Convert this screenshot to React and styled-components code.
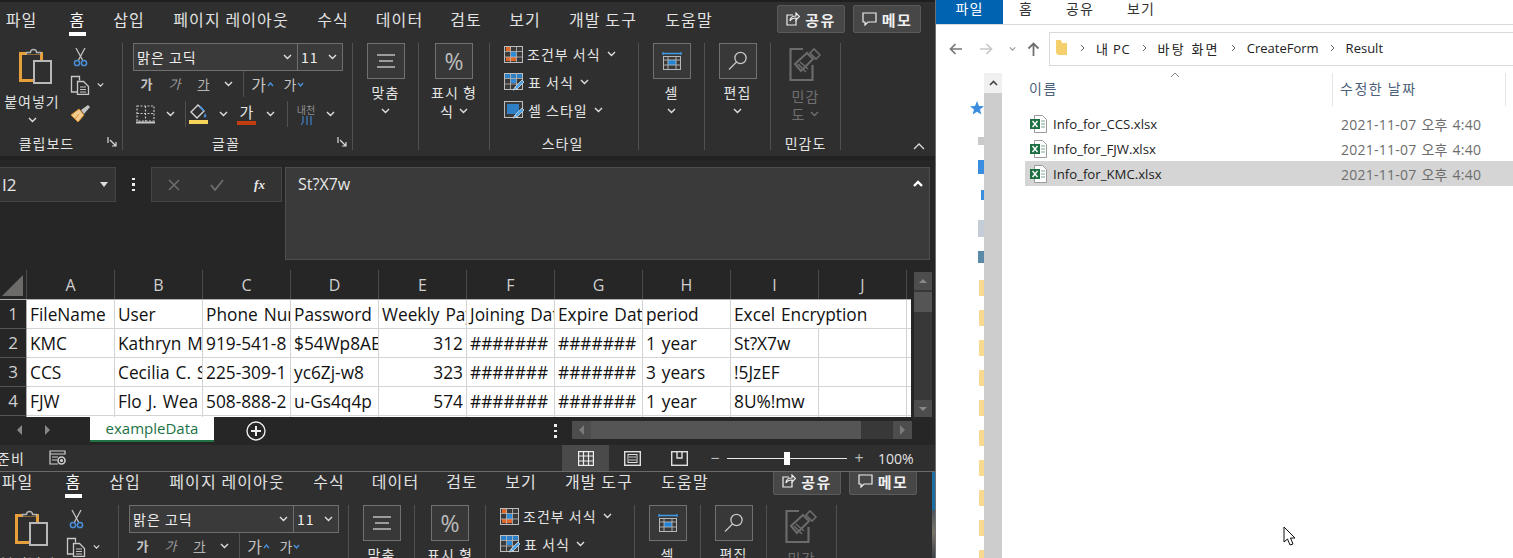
import React from "react";
import styled, { createGlobalStyle } from "styled-components";

const UI = `"Open Sans", "Noto Sans CJK KR", sans-serif`;
const KR = `"Noto Sans CJK KR", "Open Sans", sans-serif`;

const Global = createGlobalStyle`
  html, body { margin: 0; padding: 0; width: 1513px; height: 558px; overflow: hidden; background: #fff; }
  #root { width: 1513px; height: 558px; }
  * { box-sizing: border-box; }
`;

const Page = styled.div`display: flex; width: 1513px; height: 558px; overflow: hidden; font-family: ${KR};`;
const ExcelPane = styled.div`width: 935px; height: 558px; flex: none; display: flex; flex-direction: column; background: #262626;`;

/* ---------- ribbon ---------- */
const TopStrip = styled.div`height: 2px; background: #1f1f1f;`;
const TabRow = styled.div`height: 38px; background: #2f2f2f; display: flex; gap: 29px; padding: 0 14px 0 6px; align-items: flex-start;`;
const Tab = styled.div`
  width: ${p => p.$w}px; height: 38px; flex: none; display: flex; justify-content: center; padding-top: 5px; position: relative; margin-left: ${p => p.$ml || 0}px;
  font-size: 16px; line-height: 24px; letter-spacing: 1.1px; white-space: nowrap; color: ${p => (p.$active ? "#fff" : "#e2e2e2")};
  ${p => p.$active && `&::after { content: ""; position: absolute; left: -1px; right: -1px; top: 30px; height: 4px; background: #fff; }`}
`;
const ShareRow = styled.div`margin-left: auto; display: flex; gap: 8px; padding-top: 3px;`;
const ShareButton = styled.div`
  width: 68px; height: 28px; display: flex; align-items: center; justify-content: center; gap: 5px;
  background: #474747; border: 1px solid #5a5a5a; border-radius: 2px; color: #f0f0f0; font-size: 15px; font-weight: 700; letter-spacing: 1.5px;
`;
const RibbonBar = styled.div`height: 116px; background: #2f2f2f; display: flex; padding: 3px 0 6px;`;
const Group = styled.div`
  width: ${p => p.$w}px; flex: none; display: flex; flex-direction: column;
  border-right: 1px solid #505050; position: relative;
`;
const GroupBody = styled.div`flex: 1; min-height: 0; display: flex;`;
const GroupLabel = styled.div`
  height: 22px; flex: none; display: flex; justify-content: center; padding-top: 6px; position: relative; padding-right: ${p => p.$shift || 0}px;
  font-size: 14px; line-height: 18px; letter-spacing: 1px; color: #e4e4e4; white-space: nowrap;
`;
const Launcher = styled.svg`position: absolute; right: 4px; top: 9px;`;
const CollapseMark = styled.svg`position: absolute; right: -85px; bottom: 0px;`;
const PasteColumn = styled.div`width: 64px; flex: none; display: flex; flex-direction: column; align-items: center; padding-top: 3px;`;
const PasteSvg = styled.svg`margin-left: 5px; flex: none;`;
const PasteLabel = styled.div`font-size: 14px; line-height: 18px; letter-spacing: 1px; color: #e4e4e4; margin-top: 8px; white-space: nowrap;`;
const ChevronBelow = styled.div`display: flex; height: 6px; margin-top: ${p => p.$mt}px; gap: 4px; align-items: center; justify-content: center;`;
const ToolColumn = styled.div`width: 40px; flex: none; display: flex; flex-direction: column; padding-left: 4px;`;
const ToolRow = styled.div`height: ${p => p.$h}px; display: flex; align-items: center; gap: 5px;`;
const FontColumn = styled.div`flex: 1; display: flex; flex-direction: column; padding-left: 10px;`;
const SelectRow = styled.div`display: flex; height: 28px; flex: none;`;
const SelectBox = styled.div`
  width: ${p => p.$w}px; height: 28px; display: flex; align-items: center; justify-content: space-between; padding: 0 5px 0 3px; margin-left: ${p => p.$ml || 0}px;
  background: #3a3a3a; border: 1px solid #6f6f6f; color: #eee; font-size: 14px; letter-spacing: 1px; white-space: nowrap;
`;
const SlotRow = styled.div`display: flex; align-items: center; height: ${p => p.$h}px; margin-top: ${p => p.$mt || 0}px;`;
const Slot = styled.div`width: ${p => p.$w}px; flex: none; display: flex; align-items: center; justify-content: center; gap: 1px;`;
const Glyph = styled.span`
  font-size: ${p => p.$size || 13}px; line-height: 18px; color: ${p => p.$color || "#c4c4c4"}; font-weight: ${p => p.$weight || 400};
  font-style: ${p => (p.$italic ? "italic" : "normal")}; text-decoration: ${p => (p.$under ? "underline" : "none")};
`;
const ColorStack = styled.div`display: flex; flex-direction: column; align-items: center; width: 19px;`;
const ColorBar = styled.div`width: 19px; height: 4px; background: ${p => p.$c}; margin-top: 1px;`;
const ColorGlyph = styled.span`font-size: 15px; line-height: 17px; color: #e6e6e6;`;
const PhoneticStack = styled.div`display: flex; flex-direction: column; align-items: center;`;
const PhoneticText = styled.span`font-size: 10px; line-height: 12px; color: #8f8f8f;`;
const Divider = styled.div`width: 1px; height: ${p => p.$h}px; background: #505050; flex: none; margin-left: ${p => p.$ml || 0}px;`;
const BigColumn = styled.div`flex: 1; display: flex; flex-direction: column; align-items: center;`;
const BigButton = styled.div`width: 38px; height: 36px; flex: none; display: flex; align-items: center; justify-content: center; background: #383838; border: 1px solid #707070;`;
const PercentMark = styled.span`font-size: 23px; line-height: 1; color: #bdbdbd; font-family: "Open Sans", sans-serif;`;
const BigLabel = styled.div`
  font-size: 14px; line-height: 18px; letter-spacing: 1px; margin-top: ${p => p.$mt ?? 4}px; white-space: nowrap; display: flex; align-items: center; gap: 5px;
  color: ${p => (p.$dim ? "#707070" : "#e4e4e4")};
`;
const StyleColumn = styled.div`flex: 1; display: flex; flex-direction: column; gap: 6px; padding-left: 14px;`;
const StyleRow = styled.div`height: 22px; display: flex; align-items: center; gap: 4px; font-size: 14px; letter-spacing: 1px; color: #e4e4e4; white-space: nowrap;`;
const StyleChevron = styled.span`display: flex; margin-left: 2px;`;
const SensIconWrap = styled.div`height: 39px; display: flex; align-items: flex-end;`;

/* ---------- formula bar ---------- */
const FormulaZone = styled.div`height: 114px; flex: none; background: #262626; border-top: 4px solid #222; padding-top: 7px; display: flex; align-items: flex-start;`;
const NameBox = styled.div`
  width: 116px; height: 35px; flex: none; display: flex; align-items: center; justify-content: space-between; padding: 0 7px 0 2px;
  background: #333; border: 1px solid #444; border-left: 0; color: #e6e6e6; font-family: ${UI}; font-size: 17px;
`;
const Caret = styled.span`width: 0; height: 0; border-left: 4px solid transparent; border-right: 4px solid transparent; border-top: 5px solid #ddd;`;
const VDots = styled.div`width: 35px; height: 35px; flex: none; display: flex; flex-direction: column; align-items: center; justify-content: center; gap: 3px;`;
const Dot = styled.i`width: 2.5px; height: 2.5px; background: #eee; display: block;`;
const FxBox = styled.div`width: 131px; height: 35px; flex: none; display: flex; align-items: center; background: #333; border: 1px solid #444;`;
const FxSlot = styled.div`width: 43px; display: flex; justify-content: center; align-items: center;`;
const FxText = styled.span`font-family: "Liberation Serif", serif; font-style: italic; font-weight: 700; font-size: 13px; line-height: 1; color: #e8e8e8;`;
const FormulaInput = styled.div`
  width: 645px; height: 93px; flex: none; margin-left: 3px; display: flex; justify-content: space-between; padding: 4px 6px 0 12px;
  background: #3a3a3a; border: 1px solid #4e4e4e; color: #e8e8e8; font-family: ${UI}; font-size: 16px; line-height: 24px;
`;
const UpChevron = styled.svg`margin-top: 8px; flex: none;`;

/* ---------- sheet ---------- */
const SheetArea = styled.div`height: 147px; flex: none; display: flex; background: #262626;`;
const SheetGrid = styled.div`width: 911px; flex: none; overflow: hidden; display: flex; flex-direction: column;`;
const HeaderRow = styled.div`height: 30px; flex: none; display: flex; border-bottom: 1px solid #b0b0b0; background: #262626;`;
const Corner = styled.div`width: 27px; flex: none; border-right: 1px solid #4a4a4a; padding: 5px 3px 3px 2px; display: flex; align-items: flex-end; justify-content: flex-end;`;
const CornerMark = styled.div`width: 21px; height: 21px; background: #6d6a6a; clip-path: polygon(100% 0, 100% 100%, 0 100%);`;
const ColHead = styled.div`
  width: ${p => p.$w}px; flex: none; text-align: center; border-right: 1px solid ${p => (p.$end ? "transparent" : "#4a4a4a")};
  font-family: ${UI}; font-size: 16px; line-height: 30px; color: #cfcfcf;
`;
const BodyRow = styled.div`height: 29px; flex: none; display: flex;`;
const RowHead = styled.div`
  width: 27px; flex: none; background: #262626; border-bottom: 1px solid #555; border-right: 1px solid #b0b0b0; text-align: center;
  font-family: ${UI}; font-size: 17px; line-height: 28px; color: #cfcfcf;
`;
const Cell = styled.div`
  width: ${p => p.$w}px; flex: none; background: #fff; overflow: hidden; white-space: nowrap;
  border-right: 1px solid ${p => (p.$noLine ? "#fff" : "#d4d4d4")}; border-bottom: 1px solid #d4d4d4;
  font-family: ${UI}; font-size: 17.3px; word-spacing: 1.5px; line-height: 29px; color: #111; padding: 0 3px;
  text-align: ${p => (p.$num ? "right" : "left")};
`;
const VScroll = styled.div`width: 18px; flex: none; margin: 2px 0 0 3px; height: 146px; background: #383838; display: flex; flex-direction: column;`;
const ScrollBtn = styled.div`height: 18px; flex: none; background: #4d4d4d; display: flex; align-items: center; justify-content: center;`;
const VThumb = styled.div`height: 20px; flex: none; margin-top: 2px; background: #555;`;
const VSpace = styled.div`flex: 1;`;
const TriUp = styled.span`width: 0; height: 0; border-left: 4px solid transparent; border-right: 4px solid transparent; border-bottom: 4px solid ${p => p.$c || "#888"};`;
const TriDown = styled.span`width: 0; height: 0; border-left: 4px solid transparent; border-right: 4px solid transparent; border-top: 4px solid ${p => p.$c || "#888"};`;
const TriLeft = styled.span`width: 0; height: 0; border-top: 5px solid transparent; border-bottom: 5px solid transparent; border-right: 5px solid ${p => p.$c || "#888"};`;
const TriRight = styled.span`width: 0; height: 0; border-top: 5px solid transparent; border-bottom: 5px solid transparent; border-left: 5px solid ${p => p.$c || "#888"};`;

const SheetBar = styled.div`height: 28px; flex: none; display: flex; align-items: flex-start; background: #262626;`;
const NavPair = styled.div`width: 90px; height: 26px; flex: none; display: flex; align-items: center; gap: 23px; padding-left: 17px;`;
const SheetTab = styled.div`
  width: 124px; height: 25px; flex: none; background: #fff; border-bottom: 2px solid #217346; text-align: center;
  font-family: ${UI}; font-size: 15px; line-height: 22px; color: #217346;
`;
const AddWrap = styled.div`width: 84px; height: 28px; flex: none; display: flex; align-items: center; justify-content: center;`;
const BarDots = styled.div`margin-left: 241px; width: 33px; height: 28px; flex: none; display: flex; flex-direction: column; align-items: center; justify-content: center; gap: 3px;`;
const HScroll = styled.div`width: 340px; height: 18px; flex: none; margin-top: 4px; background: #383838; display: flex;`;
const HBtn = styled.div`width: 19px; flex: none; background: #4d4d4d; display: flex; align-items: center; justify-content: center;`;
const HThumb = styled.div`width: 270px; flex: none; background: #555;`;
const HSpace = styled.div`flex: 1;`;

const StatusBar = styled.div`height: 27px; flex: none; display: flex; align-items: center; background: #2f2f2f; border-bottom: 1px solid #6a6a6a; color: #e4e4e4;`;
const ReadyText = styled.span`font-size: 14px; letter-spacing: 1px; margin-left: -3px; width: 52px; flex: none; white-space: nowrap;`;
const ViewButtons = styled.div`margin-left: 496px; display: flex; height: 26px;`;
const ViewButton = styled.div`width: 47px; display: flex; align-items: center; justify-content: center; background: ${p => (p.$active ? "#4a4a4a" : "transparent")};`;
const SliderWrap = styled.div`margin-left: 6px; display: flex; align-items: center; gap: 6px; height: 26px;`;
const ZoomMark = styled.span`font-family: ${UI}; font-size: 16px; line-height: 1; color: #bbb; width: 12px; text-align: center;`;
const SliderTrack = styled.div`width: 120px; height: 1px; background: #e8e8e8; position: relative;`;
const SliderThumb = styled.div`position: absolute; left: 57px; top: -6px; width: 6px; height: 13px; background: #fff;`;
const ZoomValue = styled.span`font-family: ${UI}; font-size: 14px; margin-left: 7px; color: #e4e4e4;`;

/* ---------- second (overlapped) window ---------- */
const BelowWindow = styled.div`flex: 1; min-height: 0; display: flex; overflow: hidden; background: #2f2f2f;`;
const BelowClip = styled.div`flex: 1; min-width: 0; overflow: hidden;`;
const BelowInner = styled.div`width: 935px; margin: -10px 0 0 -4px;`;
const Wallpaper = styled.div`width: 3px; flex: none; background: linear-gradient(#1c6ea4 0 38px, #4a5560 38px, #7d7468 60px, #3d4248 100%);`;

/* ---------- explorer ---------- */
const Explorer = styled.div`flex: 1; min-width: 0; height: 558px; background: #fff; border-left: 1px solid #707070; display: flex; flex-direction: column; position: relative; overflow: hidden;`;
const ExTabs = styled.div`height: 25px; flex: none; display: flex; border-bottom: 1px solid #dadada;`;
const ExTab = styled.div`
  width: ${p => p.$w}px; height: 24px; flex: none; display: flex; justify-content: center;
  background: ${p => (p.$file ? "#0063b1" : "transparent")}; color: ${p => (p.$file ? "#fff" : "#333")};
  font-size: 14px; line-height: 17px; letter-spacing: 1px; white-space: nowrap;
`;
const ExToolbar = styled.div`height: 48px; flex: none; display: flex; align-items: flex-start; padding-top: 7px;`;
const NavArrows = styled.div`width: 113px; flex: none; height: 34px; display: flex; align-items: center; padding-left: 13px;`;
const ArrowSlot = styled.div`width: ${p => p.$w}px; flex: none; display: flex; justify-content: flex-start;`;
const Address = styled.div`flex: 1; height: 34px; border: 1px solid #d9d9d9; border-right: 0; display: flex; align-items: center; padding: 0 0 2px 6px; gap: 11px; color: #222; font-family: ${UI}; font-size: 13px; white-space: nowrap;`;
const AddressFolder = styled.svg`margin-right: 2px; flex: none;`;
const Crumb = styled.span`letter-spacing: ${p => p.$ls || 0}px;`;
const ExBody = styled.div`flex: 1; min-height: 0; display: flex;`;
const NavPane = styled.div`width: 48px; flex: none; display: flex; flex-direction: column; align-items: flex-end; overflow: hidden;`;
const NavItem = styled.div`margin-top: ${p => p.$mt}px; height: ${p => p.$h}px; width: ${p => p.$w}px; flex: none; background: ${p => p.$bg}; border-radius: ${p => p.$r || 0}px 0 0 ${p => p.$r || 0}px;`;
const NavStar = styled.svg`margin-top: 28px; flex: none;`;
const ExScroll = styled.div`width: 18px; flex: none; background: #cdcdcd; display: flex; flex-direction: column;`;
const ExScrollTop = styled.div`height: 20px; background: #f0f0f0; display: flex; align-items: center; justify-content: center;`;
const ExMain = styled.div`flex: 1; min-width: 0; display: flex; flex-direction: column; position: relative;`;
const ColHeaders = styled.div`height: 38px; flex: none; display: flex; color: #4c607a; font-size: 14px; letter-spacing: 1.5px;`;
const ColTitle = styled.div`
  width: ${p => p.$w}px; flex: none; height: 33px; padding: 4px 0 0 ${p => p.$pad}px; line-height: 22px; border-right: 1px solid #e5e5e5; white-space: nowrap;
`;
const SortCaret = styled.svg`position: absolute; left: 168px; top: -1px;`;
const FileRow = styled.div`
  height: 25px; flex: none; margin-left: 23px; display: flex; align-items: center; padding-left: 5px;
  background: ${p => (p.$sel ? "#d5d5d5" : "transparent")}; font-family: ${UI}; font-size: 13.2px; white-space: nowrap;
`;
const FileIcon = styled.svg`flex: none; margin-right: 6px;`;
const FileName = styled.span`width: 288px; flex: none; color: #222;`;
const FileDate = styled.span`color: #6d6d6d; font-size: 14px; letter-spacing: .25px; word-spacing: 1px;`;
const Pointer = styled.svg`position: absolute; left: 347px; top: 526px;`;

/* ---------- icons ---------- */
const Chev = ({ c = "#e0e0e0", w = 9 }) => (
  <svg width={w} height="6" viewBox="0 0 9 6"><path d="M1 1l3.5 3.5L8 1" fill="none" stroke={c} strokeWidth="1.4" /></svg>
);
const PasteIcon = () => (
  <PasteSvg width="34" height="38" viewBox="0 0 34 38">
    <rect x="2.5" y="7.5" width="21" height="27" fill="none" stroke="#e5a03c" strokeWidth="3" />
    <path d="M8.5 8.5v-2h4a3 3 0 0 1 6 0h4v2" fill="#2f2f2f" stroke="#b5b5b5" strokeWidth="1.3" />
    <rect x="16" y="15" width="17" height="22" fill="#2f2f2f" stroke="#b8b8b8" strokeWidth="2" />
  </PasteSvg>
);
const Scissors = () => (
  <svg width="15" height="20" viewBox="0 0 15 20">
    <path d="M3 1l6.5 12M12 1L5.5 13" fill="none" stroke="#c4c4c4" strokeWidth="1.3" />
    <circle cx="4" cy="16" r="2.6" fill="none" stroke="#4a90d9" strokeWidth="1.5" />
    <circle cx="11" cy="16" r="2.6" fill="none" stroke="#4a90d9" strokeWidth="1.5" />
  </svg>
);
const CopyIcon = () => (
  <svg width="20" height="20" viewBox="0 0 20 20" fill="none" stroke="#c8c8c8" strokeWidth="1.3">
    <path d="M7 17H1.5V1.5h8v4" /><path d="M7.5 6.5h6l5 5v8H7.5z" fill="#2f2f2f" />
    <path d="M10 12h6M10 14.5h6M10 17h6" strokeWidth="1" />
  </svg>
);
const Brush = () => (
  <svg width="21" height="19" viewBox="0 0 21 19">
    <path d="M1 11l8-6 5 6-6 7z" fill="#f2cb92" stroke="#d98f2b" />
    <path d="M5 15l4-5" stroke="#d98f2b" />
    <path d="M11 6l7-5 2 2-6 7z" fill="#c4c4c4" />
  </svg>
);
const BorderIcon = () => (
  <svg width="19" height="19" viewBox="0 0 19 19" fill="none" stroke="#c4c4c4" strokeWidth="1.2">
    <rect x="1" y="1" width="17" height="15" strokeDasharray="2 1.5" /><path d="M9.5 1v15M1 8.5h17" strokeDasharray="2 1.5" />
    <path d="M0 17.5h19" strokeWidth="2" />
  </svg>
);
const BucketIcon = () => (
  <svg width="19" height="15" viewBox="0 0 19 15">
    <path d="M9 1L2 8l6 6 7-7z" fill="none" stroke="#d8d8d8" strokeWidth="1.4" />
    <path d="M10 3l4 4 2 0-4-5z" fill="#4a90d9" /><path d="M16 9c1 2 2 3 1 4s-3 0-2-1z" fill="#4a90d9" />
  </svg>
);
const AlignIcon = () => (
  <svg width="20" height="14" viewBox="0 0 20 14"><path d="M1 1h18M3 7h14M1 13h18" stroke="#bdbdbd" strokeWidth="1.6" fill="none" /></svg>
);
const SmallGrid = ({ children }) => (
  <svg width="19" height="17" viewBox="0 0 19 17" fill="none">
    <rect x=".5" y=".5" width="18" height="16" stroke="#bdbdbd" fill="#3a3a3a" />
    {children}
    <path d="M6.5 0v17M12.5 0v17M0 5.5h19M0 11h19" stroke="#bdbdbd" strokeWidth=".8" />
  </svg>
);
const CondIcon = () => (
  <SmallGrid>
    <rect x="2" y="1" width="5" height="4" fill="#e0672a" /><rect x="7" y="6" width="5" height="5" fill="#2e8bd9" /><rect x="2" y="11" width="10" height="4" fill="#e0672a" />
  </SmallGrid>
);
const BrushMark = () => <path d="M18 7l-7 7-2 3 4-1 7-7zM11 14l3 3" fill="#4aa3e8" stroke="#d8d8d8" strokeWidth=".8" />;
const TableIcon = () => (
  <svg width="20" height="18" viewBox="0 0 20 18" fill="none">
    <rect x=".5" y=".5" width="18" height="16" stroke="#bdbdbd" fill="#3a3a3a" />
    <rect x="1" y="1" width="17" height="4" fill="#2e7fc4" /><rect x="7" y="6" width="5" height="4" fill="#2e8bd9" />
    <path d="M6.5 0v17M12.5 0v17M0 5.5h19M0 11h19" stroke="#bdbdbd" strokeWidth=".8" />
    <BrushMark />
  </svg>
);
const CellStyleIcon = () => (
  <svg width="20" height="18" viewBox="0 0 20 18" fill="none">
    <rect x=".5" y=".5" width="18" height="16" stroke="#bdbdbd" fill="#3a3a3a" />
    <rect x="3" y="3" width="12" height="10" fill="#2e7fc4" />
    <BrushMark />
  </svg>
);
const CellIcon = () => (
  <svg width="20" height="20" viewBox="0 0 20 20" fill="none">
    <path d="M1 1v3M19 1v3M1 2.5h18" stroke="#3f9be8" strokeWidth="1.3" />
    <rect x="1.5" y="5.5" width="17" height="13" stroke="#b8b8b8" fill="#3a3a3a" />
    <rect x="6" y="9" width="8" height="5" fill="#1f83d8" />
    <path d="M6 5v14M14 5v14M1 9h18M1 14h18" stroke="#b8b8b8" strokeWidth=".9" />
  </svg>
);
const Magnifier = () => (
  <svg width="20" height="20" viewBox="0 0 20 20" fill="none" stroke="#c8c8c8" strokeWidth="1.3">
    <circle cx="12.5" cy="7" r="5.6" /><path d="M8.5 11L1 18.5" />
  </svg>
);
const SensIcon = () => (
  <svg width="33" height="36" viewBox="0 0 33 36" fill="none" stroke="#6b6b6b">
    <path d="M14 3H1.5v31h22V19" strokeWidth="2.2" />
    <path d="M6 18L18 7l6 6-12 12z" strokeWidth="2" fill="#2f2f2f" />
    <path d="M9 18l8 8M11 16l8 7M21 7l4-4 6 6-4 4z" strokeWidth="1.6" />
  </svg>
);
const LaunchMark = () => (
  <Launcher width="11" height="11" viewBox="0 0 11 11" fill="none" stroke="#dcdcdc" strokeWidth="1.2">
    <path d="M1 0v6M3 3l6 6M9 5v4H5" />
  </Launcher>
);
const ShareIcon = () => (
  <svg width="14" height="14" viewBox="0 0 14 14" fill="none" stroke="#eee" strokeWidth="1.2">
    <path d="M7 3H1v10h9V8" /><path d="M4 9c0-3 2-5 6-5V1l3.5 3.5L10 8V6C7 6 5 7 4 9z" />
  </svg>
);
const MemoIcon = () => (
  <svg width="15" height="14" viewBox="0 0 15 14" fill="none" stroke="#eee" strokeWidth="1.2">
    <path d="M1 1h13v9H6l-3 3v-3H1z" />
  </svg>
);
const PhoneticBars = () => (
  <svg width="11" height="9" viewBox="0 0 11 9"><path d="M2 0v6L0 9M6 0v9M10 0v9" stroke="#3f83c8" strokeWidth="1.2" fill="none" /></svg>
);
const ExcelFile = () => (
  <FileIcon width="17" height="18" viewBox="0 0 17 18" fill="none">
    <path d="M4.5.5h8l4 4v13h-12z" fill="#fff" stroke="#9a9a9a" />
    <path d="M11 6h4M11 9h4M11 12h4" stroke="#7aa58d" />
    <rect x="0" y="4" width="10" height="10" fill="#1d6f42" />
    <path d="M2.5 6l5 6M7.5 6l-5 6" stroke="#fff" strokeWidth="1.4" />
  </FileIcon>
);
const CrumbArrow = () => (
  <svg width="5" height="8" viewBox="0 0 5 8"><path d="M1 1l3 3-3 3" fill="none" stroke="#666" /></svg>
);

/* ---------- ribbon composite ---------- */
const tabs = [
  ["파일", 31, false, 0], ["홈", 15, true, 4], ["삽입", 30], ["페이지 레이아웃", 116], ["수식", 30],
  ["데이터", 45], ["검토", 30], ["보기", 30], ["개발 도구", 68], ["도움말", 46],
];

const BigTool = ({ icon, label }) => (
  <BigColumn>
    <BigButton>{icon}</BigButton>
    <BigLabel>{label}</BigLabel>
    <ChevronBelow $mt={7}><Chev /></ChevronBelow>
  </BigColumn>
);

const Ribbon = () => (
  <>
    <TopStrip />
    <TabRow>
      {tabs.map(([t, w, a, ml]) => <Tab key={t} $w={w} $active={a} $ml={ml}>{t}</Tab>)}
      <ShareRow>
        <ShareButton><ShareIcon />공유</ShareButton>
        <ShareButton><MemoIcon />메모</ShareButton>
      </ShareRow>
    </TabRow>
    <RibbonBar>
      <Group $w={123}>
        <GroupBody>
          <PasteColumn>
            <PasteIcon />
            <PasteLabel>붙여넣기</PasteLabel>
            <ChevronBelow $mt={7}><Chev /></ChevronBelow>
          </PasteColumn>
          <ToolColumn>
            <ToolRow $h={28}><Slot $w={24}><Scissors /></Slot></ToolRow>
            <ToolRow $h={27}><Slot $w={24}><CopyIcon /></Slot><Chev /></ToolRow>
            <ToolRow $h={30}><Slot $w={24}><Brush /></Slot></ToolRow>
          </ToolColumn>
        </GroupBody>
        <GroupLabel $shift={29}>클립보드<LaunchMark /></GroupLabel>
      </Group>
      <Group $w={230}>
        <GroupBody>
          <FontColumn>
            <SelectRow>
              <SelectBox $w={165}>맑은 고딕<Chev /></SelectBox>
              <SelectBox $w={46} $ml={-1}>11<Chev /></SelectBox>
            </SelectRow>
            <SlotRow $h={26}>
              <Slot $w={27}><Glyph $weight={700}>가</Glyph></Slot>
              <Slot $w={29}><Glyph $italic $color="#9a9a9a">가</Glyph></Slot>
              <Slot $w={29}><Glyph $under $color="#b4b4b4">가</Glyph></Slot>
              <Slot $w={20}><Chev /></Slot>
              <Divider $h={26} $ml={5} />
              <Slot $w={37}><Glyph $size={16}>가</Glyph><svg width="7" height="5" viewBox="0 0 7 5"><path d="M1 4l2.5-3L6 4" fill="none" stroke="#4a90d9" strokeWidth="1.4" /></svg></Slot>
              <Slot $w={26}><Glyph $size={14}>가</Glyph><svg width="7" height="5" viewBox="0 0 7 5"><path d="M1 1l2.5 3L6 1" fill="none" stroke="#4a90d9" strokeWidth="1.4" /></svg></Slot>
            </SlotRow>
            <SlotRow $h={28} $mt={3}>
              <Slot $w={25}><BorderIcon /></Slot>
              <Slot $w={24}><Chev /></Slot>
              <Slot $w={3} />
              <Divider $h={26} />
              <Slot $w={24}><ColorStack><BucketIcon /><ColorBar $c="#f7d45a" /></ColorStack></Slot>
              <Slot $w={26}><Chev /></Slot>
              <Slot $w={21}><ColorStack><ColorGlyph>가</ColorGlyph><ColorBar $c="#c23d0f" /></ColorStack></Slot>
              <Slot $w={27}><Chev /></Slot>
              <Slot $w={3} />
              <Divider $h={26} />
              <Slot $w={36}><PhoneticStack><PhoneticText>내천</PhoneticText><PhoneticBars /></PhoneticStack></Slot>
              <Slot $w={12}><Chev /></Slot>
            </SlotRow>
          </FontColumn>
        </GroupBody>
        <GroupLabel $shift={23}>글꼴<LaunchMark /></GroupLabel>
      </Group>
      <Group $w={66}>
        <GroupBody><BigTool icon={<AlignIcon />} label="맞춤" /></GroupBody>
      </Group>
      <Group $w={71}>
        <GroupBody>
          <BigColumn>
            <BigButton><PercentMark>%</PercentMark></BigButton>
            <BigLabel>표시 형</BigLabel>
            <BigLabel $mt={1}>식<Chev /></BigLabel>
          </BigColumn>
        </GroupBody>
      </Group>
      <Group $w={149}>
        <GroupBody>
          <StyleColumn>
            <StyleRow><CondIcon />조건부 서식<StyleChevron><Chev /></StyleChevron></StyleRow>
            <StyleRow><TableIcon />표 서식<StyleChevron><Chev /></StyleChevron></StyleRow>
            <StyleRow><CellStyleIcon />셀 스타일<StyleChevron><Chev /></StyleChevron></StyleRow>
          </StyleColumn>
        </GroupBody>
        <GroupLabel $shift={3}>스타일</GroupLabel>
      </Group>
      <Group $w={66}><GroupBody><BigTool icon={<CellIcon />} label="셀" /></GroupBody></Group>
      <Group $w={66}><GroupBody><BigTool icon={<Magnifier />} label="편집" /></GroupBody></Group>
      <Group $w={70}>
        <GroupBody>
          <BigColumn>
            <SensIconWrap><SensIcon /></SensIconWrap>
            <BigLabel $dim $mt={5}>민감</BigLabel>
            <BigLabel $dim $mt={0}>도<Chev c="#707070" /></BigLabel>
          </BigColumn>
        </GroupBody>
        <GroupLabel>민감도</GroupLabel>
        <CollapseMark width="12" height="8" viewBox="0 0 12 8"><path d="M1 7l5-5 5 5" fill="none" stroke="#dcdcdc" strokeWidth="1.3" /></CollapseMark>
      </Group>
    </RibbonBar>
  </>
);

/* ---------- data ---------- */
const letters = ["A", "B", "C", "D", "E", "F", "G", "H", "I", "J"];
const hash = "#######";
const rows = [
  ["FileName", "User", "Phone Number", "Password", "Weekly Pay", "Joining Date", "Expire Date", "period", "Excel Encryption"],
  ["KMC", "Kathryn M", "919-541-8", "$54Wp8AE", "312", hash, hash, "1 year", "St?X7w", ""],
  ["CCS", "Cecilia C. S", "225-309-1", "yc6Zj-w8", "323", hash, hash, "3 years", "!5JzEF", ""],
  ["FJW", "Flo J. Wea", "508-888-2", "u-Gs4q4p", "574", hash, hash, "1 year", "8U%!mw", ""],
  ["", "", "", "", "", "", "", "", "", ""],
];
const files = [
  ["Info_for_CCS.xlsx", false],
  ["Info_for_FJW.xlsx", false],
  ["Info_for_KMC.xlsx", true],
];
const folderTops = [17, 14, 14, 14, 14, 14, 14, 14, 14, 14];

const SheetRow = ({ n, cells }) => (
  <BodyRow>
    <RowHead>{n <= 4 ? n : ""}</RowHead>
    {cells.map((c, i) =>
      c === "Excel Encryption"
        ? <Cell key={i} $w={176}>{c}</Cell>
        : <Cell key={i} $w={88} $num={i === 4 && n > 1}>{c}</Cell>
    )}
    <Cell $w={4} $noLine />
  </BodyRow>
);

export default function App() {
  return (
    <Page>
      <Global />
      <ExcelPane>
        <Ribbon />
        <FormulaZone>
          <NameBox>I2<Caret /></NameBox>
          <VDots><Dot /><Dot /><Dot /></VDots>
          <FxBox>
            <FxSlot>
              <svg width="12" height="12" viewBox="0 0 12 12"><path d="M1 1l10 10M11 1L1 11" stroke="#6e6e6e" strokeWidth="1.5" /></svg>
            </FxSlot>
            <FxSlot>
              <svg width="14" height="12" viewBox="0 0 14 12"><path d="M1 6l4 5 8-10" stroke="#6e6e6e" strokeWidth="1.8" fill="none" /></svg>
            </FxSlot>
            <FxSlot><FxText>fx</FxText></FxSlot>
          </FxBox>
          <FormulaInput>
            St?X7w
            <UpChevron width="10" height="7" viewBox="0 0 10 7"><path d="M1 6l4-4 4 4" fill="none" stroke="#fff" strokeWidth="2.4" /></UpChevron>
          </FormulaInput>
        </FormulaZone>
        <SheetArea>
          <SheetGrid>
            <HeaderRow>
              <Corner><CornerMark /></Corner>
              {letters.map(l => <ColHead key={l} $w={88}>{l}</ColHead>)}
              <ColHead $w={4} $end />
            </HeaderRow>
            {rows.map((r, i) => <SheetRow key={i} n={i + 1} cells={r} />)}
          </SheetGrid>
          <VScroll>
            <ScrollBtn><TriUp /></ScrollBtn>
            <VThumb />
            <VSpace />
            <ScrollBtn><TriDown /></ScrollBtn>
          </VScroll>
        </SheetArea>
        <SheetBar>
          <NavPair><TriLeft /><TriRight /></NavPair>
          <SheetTab>exampleData</SheetTab>
          <AddWrap>
            <svg width="20" height="20" viewBox="0 0 20 20" fill="none" stroke="#eee" strokeWidth="1.4">
              <circle cx="10" cy="10" r="9" /><path d="M10 5v10M5 10h10" strokeWidth="2" />
            </svg>
          </AddWrap>
          <BarDots><Dot /><Dot /><Dot /></BarDots>
          <HScroll>
            <HBtn><TriLeft $c="#7a7a7a" /></HBtn>
            <HThumb />
            <HSpace />
            <HBtn><TriRight $c="#7a7a7a" /></HBtn>
          </HScroll>
        </SheetBar>
        <StatusBar>
          <ReadyText>준비</ReadyText>
          <svg width="17" height="16" viewBox="0 0 17 16" fill="none" stroke="#cfcfcf" strokeWidth="1.2">
            <path d="M1 1h15v3H1zM1 4v10h8M3 7h6M3 10h5" /><circle cx="12.5" cy="10.5" r="3.5" strokeWidth="1.6" /><circle cx="12.5" cy="10.5" r="1" fill="#cfcfcf" />
          </svg>
          <ViewButtons>
            <ViewButton $active>
              <svg width="16" height="15" viewBox="0 0 16 15" fill="none" stroke="#eee" strokeWidth="1.2"><rect x=".6" y=".6" width="14.8" height="13.8" /><path d="M5.5 0v15M10.5 0v15M0 5h16M0 10h16" /></svg>
            </ViewButton>
            <ViewButton>
              <svg width="17" height="15" viewBox="0 0 17 15" fill="none" stroke="#e0e0e0" strokeWidth="1.4"><rect x=".7" y=".7" width="15.6" height="13.6" /><rect x="4" y="3.5" width="9" height="8" strokeWidth="1" /><path d="M5 6h7M5 9h7" strokeWidth=".9" /></svg>
            </ViewButton>
            <ViewButton>
              <svg width="17" height="15" viewBox="0 0 17 15" fill="none" stroke="#e0e0e0" strokeWidth="1.4"><rect x=".7" y=".7" width="15.6" height="13.6" /><path d="M6 1v6h5V1" /></svg>
            </ViewButton>
          </ViewButtons>
          <SliderWrap>
            <ZoomMark>−</ZoomMark>
            <SliderTrack><SliderThumb /></SliderTrack>
            <ZoomMark>+</ZoomMark>
            <ZoomValue>100%</ZoomValue>
          </SliderWrap>
        </StatusBar>
        <BelowWindow>
          <BelowClip>
            <BelowInner><Ribbon /></BelowInner>
          </BelowClip>
          <Wallpaper />
        </BelowWindow>
      </ExcelPane>
      <Explorer>
        <ExTabs>
          <ExTab $file $w={67}>파일</ExTab>
          <ExTab $w={46}>홈</ExTab>
          <ExTab $w={62}>공유</ExTab>
          <ExTab $w={60}>보기</ExTab>
        </ExTabs>
        <ExToolbar>
          <NavArrows>
            <ArrowSlot $w={31}><svg width="14" height="12" viewBox="0 0 14 12"><path d="M13 6H2M6.5 1L1.5 6l5 5" fill="none" stroke="#777" strokeWidth="1.7" /></svg></ArrowSlot>
            <ArrowSlot $w={29}><svg width="13" height="12" viewBox="0 0 13 12"><path d="M0 6h11M6.5 1l5 5-5 5" fill="none" stroke="#c8c8c8" strokeWidth="1.7" /></svg></ArrowSlot>
            <ArrowSlot $w={18}><Chev c="#999" w={7} /></ArrowSlot>
            <ArrowSlot $w={14}><svg width="13" height="14" viewBox="0 0 13 14"><path d="M6.5 14V2M1.5 6.5l5-5 5 5" fill="none" stroke="#707070" strokeWidth="1.8" /></svg></ArrowSlot>
          </NavArrows>
          <Address>
            <AddressFolder width="11" height="16" viewBox="0 0 11 16"><path d="M0 0h5l1 3h5v12H2L0 13z" fill="#f6cf6d" /></AddressFolder>
            <CrumbArrow />
            <Crumb $ls={.8}>내 PC</Crumb>
            <CrumbArrow />
            <Crumb $ls={2.2}>바탕 화면</Crumb>
            <CrumbArrow />
            <Crumb>CreateForm</Crumb>
            <CrumbArrow />
            <Crumb>Result</Crumb>
          </Address>
        </ExToolbar>
        <ExBody>
          <NavPane>
            <NavStar width="14" height="14" viewBox="0 0 14 14"><path d="M7 0l2 5 5 .3-4 3.2 1.3 5L7 10.8 2.7 13.5 4 8.5 0 5.3 5 5z" fill="#3b8de0" /></NavStar>
            <NavItem $mt={22} $h={8} $w={6} $bg="#c9c9c9" />
            <NavItem $mt={15} $h={14} $w={6} $bg="#3b8de0" />
            <NavItem $mt={16} $h={10} $w={3} $bg="#3b8de0" />
            <NavItem $mt={20} $h={17} $w={6} $bg="#c4ccd6" />
            <NavItem $mt={14} $h={12} $w={6} $bg="#5b8aa8" />
            {folderTops.map((t, i) => <NavItem key={i} $mt={t} $h={16} $w={5} $bg="#f7d98f" $r={1} />)}
          </NavPane>
          <ExScroll>
            <ExScrollTop><svg width="9" height="6" viewBox="0 0 9 6"><path d="M1 5l3.5-3.5L8 5" fill="none" stroke="#444" strokeWidth="1.6" /></svg></ExScrollTop>
          </ExScroll>
          <ExMain>
            <ColHeaders>
              <ColTitle $w={331} $pad={27}>이름</ColTitle>
              <ColTitle $w={173} $pad={7}>수정한 날짜</ColTitle>
              <SortCaret width="10" height="6" viewBox="0 0 10 6"><path d="M1 5l4-4 4 4" fill="none" stroke="#888" /></SortCaret>
            </ColHeaders>
            {files.map(([n, s]) => (
              <FileRow key={n} $sel={s}>
                <ExcelFile />
                <FileName>{n}</FileName>
                <FileDate>2021-11-07 오후 4:40</FileDate>
              </FileRow>
            ))}
          </ExMain>
        </ExBody>
        <Pointer width="14" height="20" viewBox="0 0 14 20"><path d="M1 1v15l3.5-3 2.5 6 3-1-2.5-6H12z" fill="#fff" stroke="#111" /></Pointer>
      </Explorer>
    </Page>
  );
}
